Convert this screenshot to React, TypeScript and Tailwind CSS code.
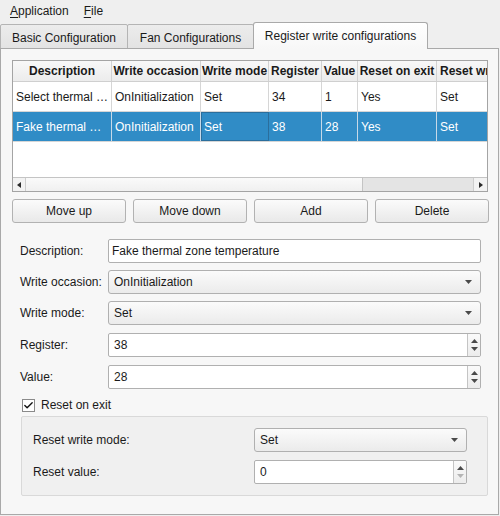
import { Check } from "lucide-react";

type Col = { title: string; width: string; align: string };

const columns: Col[] = [
  { title: "Description", width: "w-[99px]", align: "justify-center" },
  { title: "Write occasion", width: "w-[89px]", align: "justify-center" },
  { title: "Write mode", width: "w-[68px]", align: "justify-center" },
  { title: "Register", width: "w-[53px]", align: "justify-center" },
  { title: "Value", width: "w-[36px]", align: "justify-center" },
  { title: "Reset on exit", width: "w-[79px]", align: "justify-center" },
  { title: "Reset write mode", width: "w-[120px]", align: "justify-start pl-[3px]" },
];

const rows = [
  ["Select thermal …", "OnInitialization", "Set", "34", "1", "Yes", "Set"],
  ["Fake thermal …", "OnInitialization", "Set", "38", "28", "Yes", "Set"],
];

const DownArrow = ({ color = "#4a4a4a" }: { color?: string }) => (
  <svg width="7" height="4" viewBox="0 0 7 4">
    <polygon points="0,0 7,0 3.5,4" fill={color} />
  </svg>
);

const UpArrow = ({ color = "#4a4a4a" }: { color?: string }) => (
  <svg width="7" height="4" viewBox="0 0 7 4">
    <polygon points="0,4 7,4 3.5,0" fill={color} />
  </svg>
);

const MenuBar = () => (
  <div className="flex h-[22px] items-center gap-[15px] pl-[10px]">
    <span>
      <span className="underline underline-offset-2">A</span>pplication
    </span>
    <span>
      <span className="underline underline-offset-2">F</span>ile
    </span>
  </div>
);

const TabBar = () => (
  <div className="flex h-[27px] items-end">
    <div className="flex h-[25px] w-[128px] items-center justify-center rounded-t-[2px] border border-[#b4b4b4] bg-gradient-to-b from-[#ececec] to-[#e3e3e3] pt-[2px]">
      Basic Configuration
    </div>
    <div className="-ml-px flex h-[25px] w-[127px] items-center justify-center rounded-t-[2px] border border-[#b4b4b4] bg-gradient-to-b from-[#ececec] to-[#e3e3e3] pt-[2px]">
      Fan Configurations
    </div>
    <div className="relative z-10 -ml-px flex h-[27px] w-[175px] items-center justify-center rounded-t-[3px] border border-b-0 border-[#a9a9a9] bg-gradient-to-b from-[#ffffff] to-[#f7f7f7] pb-[1px]">
      Register write configurations
    </div>
  </div>
);

const RegisterTable = () => (
  <div className="flex h-[132px] w-[476px] flex-col overflow-hidden border border-[#a4a4a4] bg-white">
    <div className="flex h-[21px] shrink-0 border-b border-[#cfcfcf] bg-gradient-to-b from-[#f8f8f8] to-[#ececec] font-bold">
      {columns.map((c) => (
        <div
          key={c.title}
          className={`flex shrink-0 items-center overflow-hidden whitespace-nowrap border-r border-[#d2d2d2] ${c.width} ${c.align}`}
        >
          {c.title}
        </div>
      ))}
    </div>
    {rows.map((row, r) => (
      <div
        key={r}
        className={`flex h-[30px] shrink-0 border-b border-[#d6d6d6] ${r === 1 ? "bg-[#308cc6] text-white" : ""}`}
      >
        {row.map((cell, i) => (
          <div
            key={i}
            className={`flex shrink-0 items-center overflow-hidden whitespace-nowrap border-r pl-[3px] ${columns[i].width} ${
              r === 1 ? "border-[#c6d9e8]" : "border-[#d6d6d6]"
            } ${r === 1 && i === 2 ? "outline outline-1 -outline-offset-1 outline-[#2b6e9c]" : ""}`}
          >
            {cell}
          </div>
        ))}
      </div>
    ))}
    <div className="flex-1" />
    <div className="flex h-[14px] shrink-0 border-t border-[#c4c4c4] bg-[#e4e4e4]">
      <div className="flex w-[13px] items-center justify-center border-r border-[#cdcdcd] bg-[#f2f2f2]">
        <svg width="4" height="6" viewBox="0 0 4 6">
          <polygon points="4,0 4,6 0,3" fill="#2a2a2a" />
        </svg>
      </div>
      <div className="w-[337px] border-r border-[#c4c4c4] bg-gradient-to-b from-[#fafafa] to-[#f0f0f0]" />
      <div className="w-[110px]" />
      <div className="flex w-[14px] items-center justify-center border-l border-[#cdcdcd] bg-[#f2f2f2]">
        <svg width="4" height="6" viewBox="0 0 4 6">
          <polygon points="0,0 0,6 4,3" fill="#2a2a2a" />
        </svg>
      </div>
    </div>
  </div>
);

const PushButton = ({ label }: { label: string }) => (
  <div className="flex h-[24px] flex-1 items-center justify-center rounded-[3px] border border-[#b2b2b2] bg-gradient-to-b from-[#fbfbfb] to-[#e9e9e9]">
    {label}
  </div>
);

const TextField = ({ value }: { value: string }) => (
  <div className="flex h-[24px] flex-1 items-center rounded-[2px] border border-[#b0b0b0] bg-white pl-[3px]">
    {value}
  </div>
);

const ComboBox = ({ value, className = "flex-1" }: { value: string; className?: string }) => (
  <div
    className={`flex h-[24px] items-center justify-between rounded-[3px] border border-[#b0b0b0] bg-gradient-to-b from-[#fbfbfb] to-[#ebebeb] pl-[5px] pr-[8px] ${className}`}
  >
    <span>{value}</span>
    <DownArrow />
  </div>
);

const SpinBox = ({
  value,
  className = "flex-1",
  atMin = false,
}: {
  value: string;
  className?: string;
  atMin?: boolean;
}) => (
  <div className={`flex h-[24px] rounded-[2px] border border-[#b0b0b0] bg-white ${className}`}>
    <div className="flex flex-1 items-center pl-[5px]">{value}</div>
    <div className="flex w-[13px] flex-col items-center justify-center gap-[4px] rounded-r-[2px] border-l border-[#c4c4c4] bg-gradient-to-b from-[#fafafa] to-[#ececec]">
      <UpArrow color="#4a4a4a" />
      <DownArrow color={atMin ? "#b4b4b4" : "#4a4a4a"} />
    </div>
  </div>
);

const FormRow = ({ label, children, className }: { label: string; children: React.ReactNode; className: string }) => (
  <div className={`flex h-[24px] items-center ${className}`}>
    <div className="w-[88px] shrink-0">{label}</div>
    {children}
  </div>
);

export default function App() {
  return (
    <div className="flex h-[516px] w-[500px] flex-col bg-[#efefef] font-['Liberation_Sans',Arial,sans-serif] text-[12px] text-[#1a1a1a]">
      <MenuBar />
      <div className="flex flex-1 flex-col pb-px pr-px">
        <TabBar />
        <div className="-mt-px flex flex-1 flex-col border border-[#a9a9a9] bg-[#f7f7f7] pl-[11px] pr-[9px] pt-[11px]">
          <RegisterTable />
          <div className="mt-[7px] flex gap-[7px]">
            <PushButton label="Move up" />
            <PushButton label="Move down" />
            <PushButton label="Add" />
            <PushButton label="Delete" />
          </div>
          <div className="flex flex-col pl-[8px] pr-[8px]">
            <FormRow label="Description:" className="mt-[16px]">
              <TextField value="Fake thermal zone temperature" />
            </FormRow>
            <FormRow label="Write occasion:" className="mt-[7px]">
              <ComboBox value="OnInitialization" />
            </FormRow>
            <FormRow label="Write mode:" className="mt-[7px]">
              <ComboBox value="Set" />
            </FormRow>
            <FormRow label="Register:" className="mt-[8px]">
              <SpinBox value="38" />
            </FormRow>
            <FormRow label="Value:" className="mt-[8px]">
              <SpinBox value="28" />
            </FormRow>
          </div>
          <div className="mt-[9px] flex h-[14px] items-center pl-[10px]">
            <div className="flex h-[13px] w-[13px] items-center justify-center border border-[#8a8a8a] bg-white">
              <Check size={11} strokeWidth={3} color="#111" />
            </div>
            <span className="ml-[6px]">Reset on exit</span>
          </div>
          <div className="ml-[9px] mr-px mt-[4px] flex flex-col rounded-[2px] border border-[#d9d9d9] bg-[#f0f0f0] pb-[11px] pl-[11px] pr-[20px] pt-[11px]">
            <div className="flex h-[24px] items-center justify-between">
              <span>Reset write mode:</span>
              <ComboBox value="Set" className="w-[213px]" />
            </div>
            <div className="mt-[8px] flex h-[24px] items-center justify-between">
              <span>Reset value:</span>
              <SpinBox value="0" className="w-[213px]" atMin />
            </div>
          </div>
        </div>
      </div>
    </div>
  );
}
